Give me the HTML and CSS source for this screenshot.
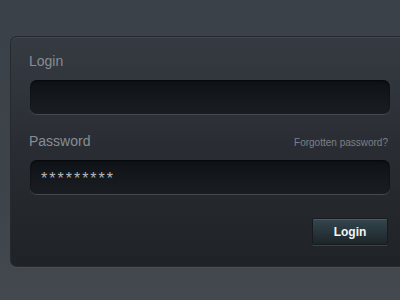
FILE: index.html
```html
<!DOCTYPE html>
<html lang="en">
<head>
  <meta charset="UTF-8">
  <title>Login</title>
  <link rel="stylesheet" href="styles.css">
</head>
<body>
  <div class="panel">
    <form class="login-form" action="#" method="POST">
      <label class="field-label" for="login">Login</label>
      <input class="field" type="text" id="login" name="login">
      <div class="label-row">
        <label class="field-label" for="password">Password</label>
        <a class="forgot" href="#">Forgotten password?</a>
      </div>
      <div class="field stars">*********</div>
      <div class="actions">
        <button type="submit">Login</button>
      </div>
    </form>
  </div>
</body>
</html>
```
FILE: styles.css
```css
body {
  margin: 0;
  height: 300px;
  overflow: hidden;
  font-family: "Liberation Sans", Arial, sans-serif;
  background: linear-gradient(#3b4148, #3d4349 60%, #43494f);
}
.panel {
  margin: 36px 0 0 10px;
  padding: 14px 0 21px 18px;
  border: 1px solid #262a2f;
  border-right: none;
  border-radius: 7px 0 0 7px;
  background: linear-gradient(#363b42, #2a2e34 45%, #1f2226);
  box-shadow: inset 0 1px 0 #434850, 0 1px 0 #4a5057;
}
.login-form {
  width: 360px;
}
.field-label {
  display: block;
  font-size: 14px;
  line-height: 20px;
  color: #878d93;
}
.field {
  display: block;
  box-sizing: border-box;
  width: 360px;
  height: 34px;
  margin: 9px 0 0 1px;
  border: none;
  border-radius: 7px;
  background: linear-gradient(#0e1216, #1a1d22);
  box-shadow: inset 0 1px 2px rgba(0, 0, 0, 0.6), 0 1px 0 #454b52;
}
.label-row {
  display: flex;
  justify-content: space-between;
  align-items: baseline;
  margin-top: 17px;
  padding-right: 1px;
}
.forgot {
  font-size: 10px;
  color: #7b8086;
  text-decoration: none;
}
.stars {
  padding-left: 11px;
  font-size: 16px;
  line-height: 38px;
  letter-spacing: 2px;
  color: #b3b7bb;
}
.actions {
  display: flex;
  justify-content: flex-end;
  margin-top: 24px;
  padding-right: 1px;
}
button {
  width: 76px;
  height: 27px;
  border: 1px solid #161b1f;
  border-radius: 2px;
  background: linear-gradient(#34464f, #1c2529);
  box-shadow: inset 0 1px 0 #4a5c64, 0 1px 0 #3c4248;
  color: #f2f4f5;
  font-family: "Liberation Sans", Arial, sans-serif;
  font-size: 12px;
  font-weight: bold;
  cursor: pointer;
}
```
